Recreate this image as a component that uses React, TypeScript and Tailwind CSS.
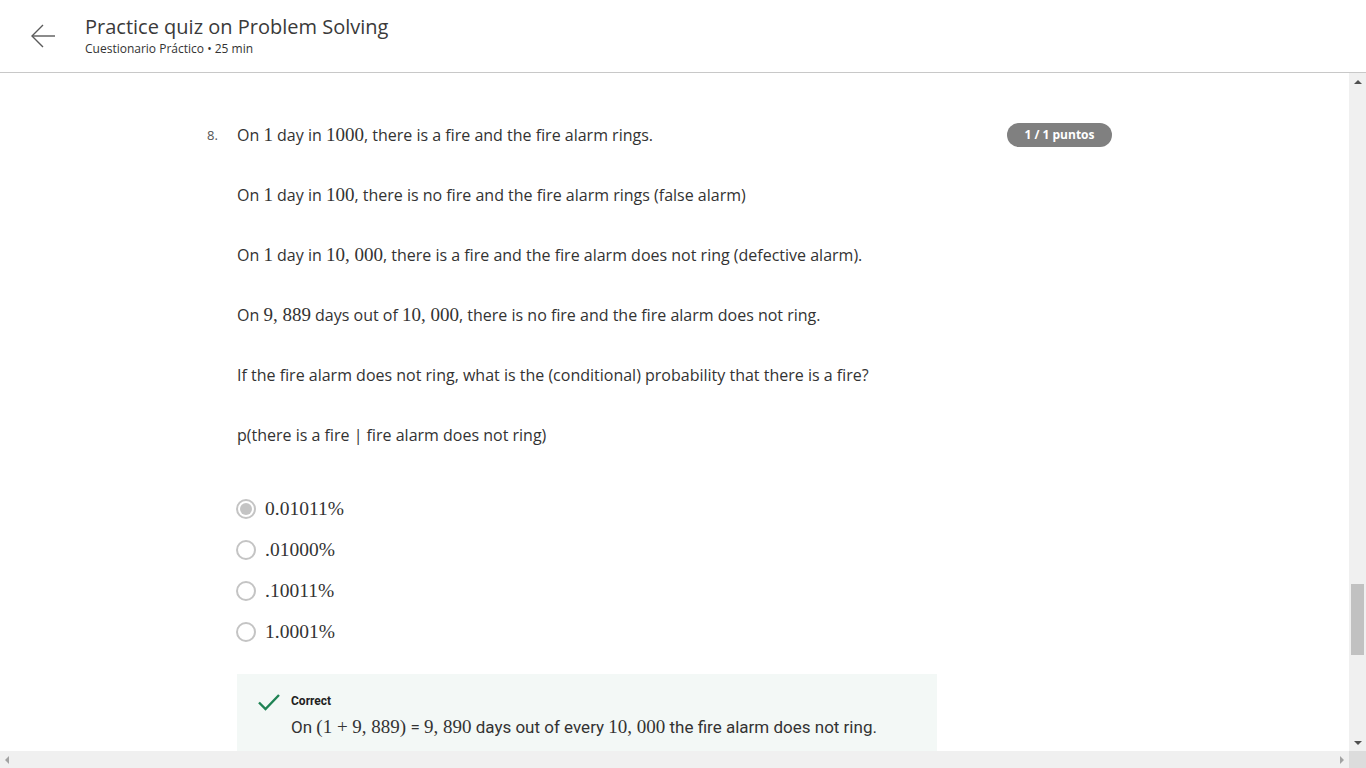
import React from "react";

const serif = "font-['Liberation_Serif',serif]";

function M({ children }: { children: React.ReactNode }) {
  return <span className={`${serif} text-[19px] leading-none`}>{children}</span>;
}

function Radio({ checked }: { checked?: boolean }) {
  return (
    <span className="w-[20px] h-[20px] rounded-full border-2 border-[#c4c4c4] flex items-center justify-center shrink-0">
      {checked && <span className="w-[12px] h-[12px] rounded-full bg-[#c4c4c4]" />}
    </span>
  );
}

const options = ["0.01011%", ".01000%", ".10011%", "1.0001%"];

export default function App() {
  return (
    <div className="h-screen w-screen flex flex-col overflow-hidden bg-white text-[#333] font-['Open_Sans',sans-serif]">
      {/* Header */}
      <header className="h-[73px] shrink-0 border-b border-[#c8c8c8] flex items-start pt-[13px]">
        <div className="w-[85px] flex justify-center pl-[1px] pt-[11px]">
          <svg width="26" height="24" viewBox="0 0 26 24" fill="none" stroke="#5a5a5a" strokeWidth="1.4">
            <path d="M25 12H2" />
            <path d="M13 1L2 12l11 11" />
          </svg>
        </div>
        <div className="flex flex-col">
          <h1 className="text-[20px] leading-[28px] text-[#3a3a3a]">Practice quiz on Problem Solving</h1>
          <p className="text-[12px] leading-[16px] text-[#333]">Cuestionario Práctico • 25 min</p>
        </div>
      </header>

      <div className="flex-1 flex min-h-0">
        {/* Content */}
        <main className="flex-1 overflow-hidden pt-[50px] pl-[207px]">
          <div className="flex items-start">
            <span className="w-[30px] shrink-0 text-[13px] leading-[24px] text-[#555]">8.</span>
            <div className="w-[770px] shrink-0 flex flex-col">
              <div className="flex flex-col gap-[36px] text-[16px] leading-[24px]">
                <p>On <M>1</M> day in <M>1000</M>, there is a fire and the fire alarm rings.</p>
                <p>On <M>1</M> day in <M>100</M>, there is no fire and the fire alarm rings (false alarm)</p>
                <p>On <M>1</M> day in <M>10, 000</M>, there is a fire and the fire alarm does not ring (defective alarm).</p>
                <p>On <M>9, 889</M> days out of <M>10, 000</M>, there is no fire and the fire alarm does not ring.</p>
                <p>If the fire alarm does not ring, what is the (conditional) probability that there is a fire?</p>
                <p>p(there is a fire | fire alarm does not ring)</p>
              </div>

              <div className="mt-[41px] flex flex-col">
                {options.map((o, i) => (
                  <div key={o} className="h-[41px] flex items-center gap-[9px] -ml-[1px]">
                    <Radio checked={i === 0} />
                    <span className={`${serif} text-[19.5px] text-[#333]`}>{o}</span>
                  </div>
                ))}
              </div>

              <div className="mt-[22px] w-[700px] bg-[#f3f8f6] pt-[18px] pb-[20px] pl-[21px] flex gap-[11px]">
                <svg width="22" height="18" viewBox="0 0 22 18" fill="none" stroke="#1f8354" strokeWidth="2.4" className="mt-[1px] shrink-0">
                  <path d="M1 9.5l6.5 6.5L21 2" />
                </svg>
                <div className="flex flex-col">
                  <span className="text-[12px] leading-[18px] font-bold text-[#1f1f1f] font-['Roboto',sans-serif]">Correct</span>
                  <p className="mt-[5px] text-[17px] leading-[24px] text-[#333] font-['Roboto',sans-serif]">
                    On <M>(1 + 9, 889)</M> = <M>9, 890</M> days out of every <M>10, 000</M> the fire alarm does not ring.
                  </p>
                </div>
              </div>
            </div>
            <div className="shrink-0 whitespace-nowrap w-[105px] h-[24px] rounded-full bg-[#808080] text-white text-[12px] leading-none font-bold flex items-center justify-center">
              1 / 1 puntos
            </div>
          </div>
        </main>

        {/* Vertical scrollbar */}
        <div className="w-[17px] shrink-0 bg-[#f0f0f0] flex flex-col items-center">
          <div className="h-[17px] flex items-center justify-center">
            <span className="w-0 h-0 border-l-[4px] border-r-[4px] border-b-[4px] border-l-transparent border-r-transparent border-b-[#505050]" />
          </div>
          <div className="h-[494px]" />
          <div className="w-[13px] h-[71px] bg-[#c1c1c1]" />
          <div className="flex-1" />
          <div className="h-[17px] flex items-center justify-center">
            <span className="w-0 h-0 border-l-[4px] border-r-[4px] border-t-[4px] border-l-transparent border-r-transparent border-t-[#505050]" />
          </div>
        </div>
      </div>

      {/* Horizontal scrollbar */}
      <div className="h-[17px] shrink-0 flex">
        <div className="flex-1 bg-[#f0f0f0] flex items-center justify-between px-[5px]">
          <span className="w-0 h-0 border-t-[4px] border-b-[4px] border-r-[4px] border-t-transparent border-b-transparent border-r-[#a3a3a3]" />
          <span className="w-0 h-0 border-t-[4px] border-b-[4px] border-l-[4px] border-t-transparent border-b-transparent border-l-[#a3a3a3]" />
        </div>
        <div className="w-[17px] bg-[#dcdcdc]" />
      </div>
    </div>
  );
}
